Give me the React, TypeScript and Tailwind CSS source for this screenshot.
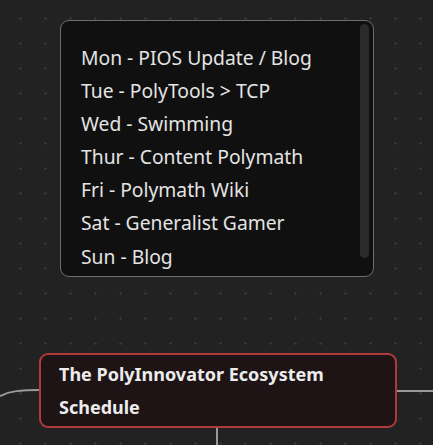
const schedule = [
  'Mon - PIOS Update / Blog',
  'Tue - PolyTools > TCP',
  'Wed - Swimming',
  'Thur - Content Polymath',
  'Fri - Polymath Wiki',
  'Sat - Generalist Gamer',
  'Sun - Blog',
];

const App = () => {
  return (
    <div
      className="relative w-[433px] h-[445px] overflow-hidden bg-[#222222] bg-[radial-gradient(circle,#383838_1px,transparent_1.2px)] bg-[size:25px_25px] bg-[position:8px_6px]"
      style={{ fontFamily: '"Noto Sans", "Open Sans", sans-serif' }}
    >
      {/* edges */}
      <svg className="absolute inset-0" width="433" height="445">
        <path d="M0 396 C 10 391, 20 390, 40 390" stroke="#9a9a9a" strokeWidth="2" fill="none" />
        <path d="M396 391 L433 391" stroke="#9a9a9a" strokeWidth="2" fill="none" />
        <path d="M217 426 L217 445" stroke="#9a9a9a" strokeWidth="2" fill="none" />
      </svg>

      {/* schedule note */}
      <div className="absolute left-[60px] top-[20px] w-[314px] h-[257px] rounded-[9px] border border-[#6e6e6e] bg-[#101010] overflow-hidden">
        <div className="pl-[20px] pt-[20px] text-[19.3px] leading-[33.1px] text-[#e4e4e4]">
          {schedule.map(line => (
            <div key={line}>{line}</div>
          ))}
        </div>
        <div className="absolute right-[4px] top-[3px] w-[9px] h-[234px] rounded-full bg-[#2a2a2a]" />
      </div>

      {/* group label */}
      <div className="absolute left-[39px] top-[353px] w-[358px] h-[75px] rounded-[9px] border-2 border-[#b03a3a] bg-[#1e1415]">
        <div className="pl-[18px] pt-[3px] text-[18px] leading-[33px] font-bold text-[#ececec]">
          <div>The PolyInnovator Ecosystem</div>
          <div>Schedule</div>
        </div>
      </div>
    </div>
  );
};

export default App;
